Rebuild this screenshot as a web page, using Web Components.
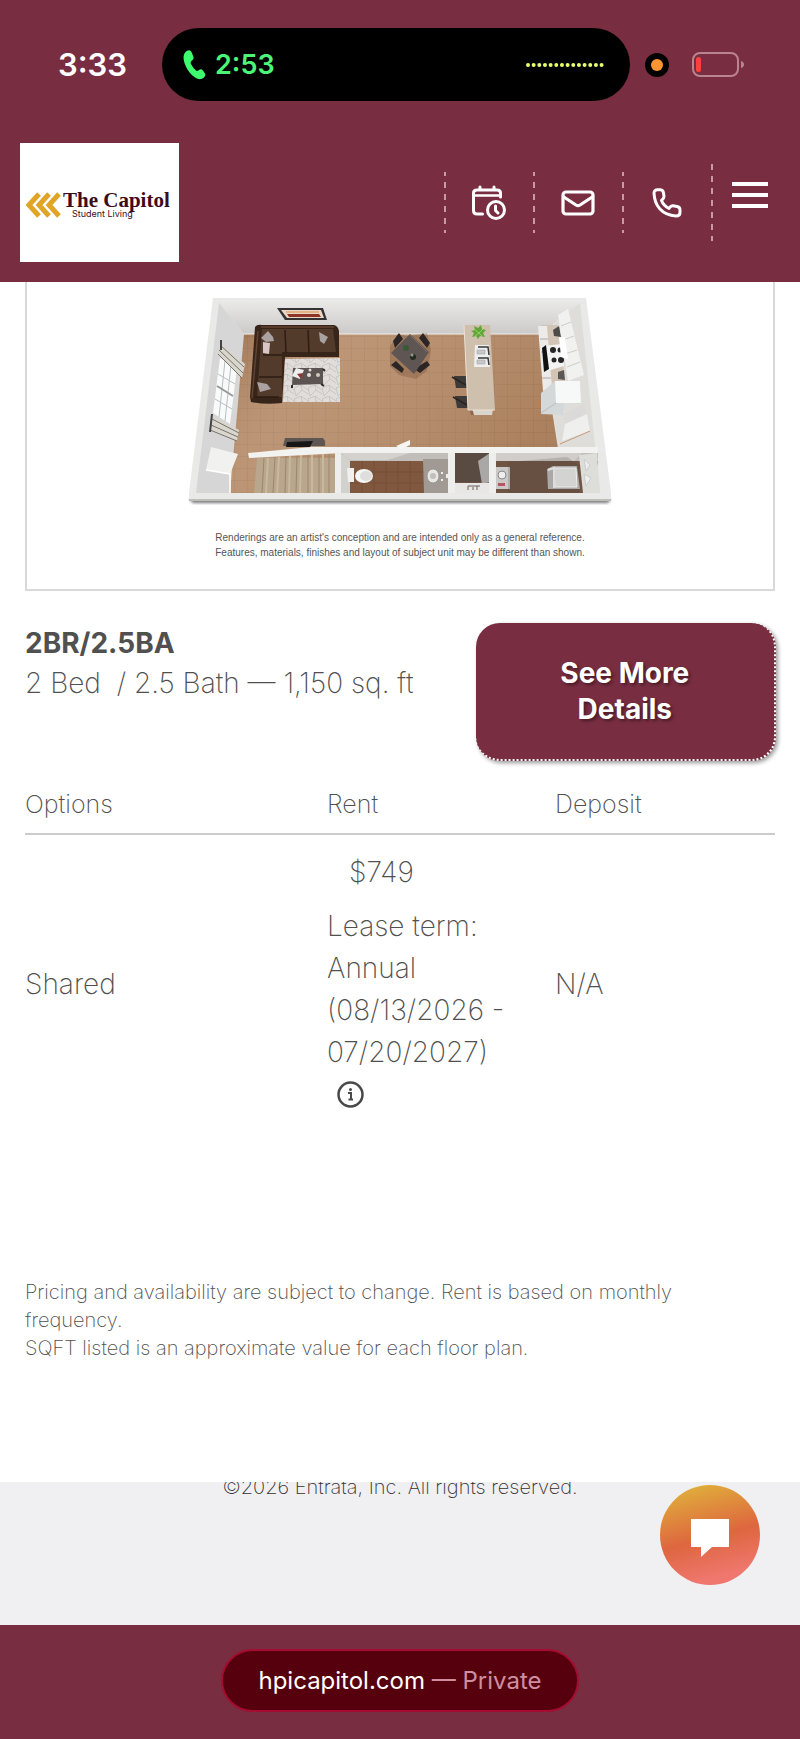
<!DOCTYPE html>
<html lang="en">
<head>
<meta charset="utf-8">
<meta name="viewport" content="width=device-width, initial-scale=1">
<title>The Capitol Student Living</title>
<style>
    body {
        --brand: #782d40;
        --ink: #505050;
        margin: 0;
        background: #fff;
        color: var(--ink);
        font-family: Inter, "Open Sans", sans-serif;
        font-weight: 200;
    }
</style>
</head>
<body>
<status-bar></status-bar>
<site-header>
    <nav-link href="#tour" label="Schedule a tour">
        <svg width="34" height="36" viewBox="0 0 34 36" fill="none" stroke="#fff" stroke-width="3" stroke-linecap="round" stroke-linejoin="round">
            <path d="M10.500 29H5q-3.500 0-3.500-3.500V8Q1.500 5 5 5H25Q28.500 5 28.500 8V12M8 2V5M22 2V5"/>
            <path d="M2 10.500H28" stroke-width="2.500"/>
            <circle cx="24" cy="25" r="8.500"/>
            <path d="M23.500 21V25.500L26 28"/>
        </svg>
    </nav-link>
    <nav-link href="#email" label="Email us">
        <svg width="34" height="26" viewBox="0 0 34 26" fill="none" stroke="#fff" stroke-width="3.200" stroke-linejoin="round">
            <rect x="2" y="2" width="30" height="22" rx="3"/>
            <path d="M2 6.500L15 15q2 1.200 4 0L32 6.500"/>
        </svg>
    </nav-link>
    <nav-link href="#call" label="Call us">
        <svg width="30" height="30" viewBox="0 0 30 30" fill="none" stroke="#fff" stroke-width="3" stroke-linejoin="round">
            <path d="M2 5C2 3 3.500 1.800 5.500 1.800H8.500Q11 2 11.500 5L12 8.500Q12 10.500 9.500 12.500C11 16.500 13.500 18.700 17 20.500Q19 17.500 21 17.800L25 18.500Q28 19 28 22V24.500Q28 28 24 28C10 27 2.500 18 2 5Z"/>
        </svg>
    </nav-link>
</site-header>
<main>
    <floor-plan>
        Renderings are an artist's conception and are intended only as a general reference.<br>
        Features, materials, finishes and layout of subject unit may be different than shown.
    </floor-plan>
    <plan-summary>
        <span slot="name">2BR/2.5BA</span>
        2 Bed &nbsp;/ 2.5 Bath — 1,150 sq. ft
        <span slot="action">See More Details</span>
    </plan-summary>
    <rent-table></rent-table>
    <plan-notes>
        Pricing and availability are subject to change. Rent is based on monthly frequency.<br>
        SQFT listed is an approximate value for each floor plan.
    </plan-notes>
</main>
<site-footer>©2026 Entrata, Inc. All rights reserved.</site-footer>
<address-bar mode="Private">hpicapitol.com</address-bar>

<script>
customElements.define('status-bar', class extends HTMLElement {
    constructor() {
        super();
        this.attachShadow({mode: "open"});
        this.shadowRoot.innerHTML = `
            <style>
                :host {
                    display: flex;
                    align-items: center;
                    padding: 28px 56px 28px 58px;
                    background: var(--brand);
                    color: #fff;
                    font-weight: 600;
                }
                .time { font-size: 31px; width: 104px; }
                .island {
                    flex: 1;
                    display: flex;
                    align-items: center;
                    height: 73px;
                    padding: 0 26px 0 21px;
                    box-sizing: border-box;
                    border-radius: 37px;
                    background: #000;
                    color: #4cf577;
                    font-size: 27px;
                    font-weight: 600;
                }
                .island span { margin: 0 auto 0 9px; }
                .mic { margin: 0 23px 0 15px; }
                svg { display: block; }
            </style>
            <span class="time">3:33</span>
            <div class="island">
                <svg width="23" height="30" viewBox="0 0 23 30" fill="#3dfc6d">
                    <path d="M3 1.500Q7-1 8.500 2L10.500 7Q11 9 9 10.500Q7 12 8 14Q10 18 13 20.500Q14 21.500 16 20Q18 18.500 19.500 20L22 23.500Q23 25.500 21 27.500Q17 31 12 27.500C6 23.500 1 15 .500 8Q.500 3.500 3 1.500Z"/>
                </svg>
                <span>2:53</span>
                <svg width="78" height="6" viewBox="0 0 78 6">
                    <path d="M2 3H77" stroke="#e6ff70" stroke-width="4" stroke-linecap="round" stroke-dasharray="0 5.660"/>
                </svg>
            </div>
            <svg class="mic" width="24" height="24" viewBox="0 0 24 24">
                <circle cx="12" cy="12" r="12"/>
                <circle cx="12" cy="12" r="6" fill="#ff9532"/>
            </svg>
            <svg width="52" height="26" viewBox="0 0 52 26">
                <rect x="1" y="1" width="45" height="23" rx="7" fill="none" stroke="#b98490" stroke-width="2"/>
                <path d="M49 9Q52 10 52 12.500Q52 15 49 16Z" fill="#b98490"/>
                <rect x="4" y="5" width="5" height="15" rx="2.500" fill="#ff3f42"/>
            </svg>
            `
    }
});

customElements.define('nav-link', class extends HTMLElement {
    constructor() {
        super();
        this.attachShadow({mode: "open"});
        this.shadowRoot.innerHTML = `
            <style>
                :host { display: block; }
                a {
                    display: flex;
                    align-items: center;
                    justify-content: center;
                    width: 89px;
                    height: 61px;
                    padding-left: 1px;
                    box-sizing: border-box;
                    background: repeating-linear-gradient(#c999a5 0 4px, transparent 4px 10px, #c999a5 10px 12px) 0 0 / 2px 100% no-repeat;
                }
            </style>
            <a><slot></slot></a>
            `
    }
    connectedCallback() {
        const link = this.shadowRoot.querySelector("a");
        link.href = this.getAttribute("href");
        link.setAttribute("aria-label", this.getAttribute("label"));
    }
});

customElements.define('site-header', class extends HTMLElement {
    constructor() {
        super();
        this.attachShadow({mode: "open"});
        this.shadowRoot.innerHTML = `
            <style>
                :host {
                    display: flex;
                    align-items: center;
                    padding: 14px 20px 20px;
                    background: var(--brand);
                }
                .logo {
                    display: flex;
                    align-items: center;
                    gap: 2px;
                    width: 159px;
                    height: 119px;
                    padding: 4px 6px 0;
                    box-sizing: border-box;
                    background: #fff;
                    color: #3e0b1b;
                    text-decoration: none;
                }
                .words { text-align: center; }
                .name {
                    display: block;
                    font: bold 21px/18px "Liberation Serif", serif;
                    white-space: nowrap;
                }
                .tag {
                    display: block;
                    margin-right: 28px;
                    font-size: 9px;
                    line-height: 10px;
                    font-weight: 400;
                }
                nav {
                    display: flex;
                    align-items: center;
                    margin-left: auto;
                }
                button {
                    width: 69px;
                    height: 77px;
                    padding: 18px 12px 33px 21px;
                    border: 0;
                    background: repeating-linear-gradient(#c999a5 0 6px, transparent 6px 12px) 0 0 / 2px 100% no-repeat;
                }
                svg { display: block; }
            </style>
            <a class="logo" href="#home">
                <svg width="35" height="26" viewBox="0 0 35 26" fill="none" stroke="#e0a526" stroke-width="5">
                    <path d="M13 2L3 13L13 24"/>
                    <path d="M23 2L13 13L23 24"/>
                    <path d="M33 2L23 13L33 24"/>
                </svg>
                <span class="words">
                    <span class="name">The Capitol</span>
                    <span class="tag">Student Living</span>
                </span>
            </a>
            <nav>
                <slot></slot>
                <button type="button" aria-label="Menu">
                    <svg width="36" height="26" viewBox="0 0 36 26" fill="#fff">
                        <path d="M0 0H36V4H0ZM0 11H36V15H0ZM0 22H36V26H0Z"/>
                    </svg>
                </button>
            </nav>
            `
    }
});

customElements.define('floor-plan', class extends HTMLElement {
    constructor() {
        super();
        this.attachShadow({mode: "open"});
        this.shadowRoot.innerHTML = `
            <style>
                :host {
                    display: block;
                    margin: 0 25px;
                    padding: 0 0 29px;
                    border: 2px solid #d9d9d9;
                    border-top: 0;
                    text-align: center;
                }
                svg {
                    display: block;
                    width: 440px;
                    max-width: 100%;
                    margin: 0 auto 18px;
                }
                p {
                    margin: 0;
                    color: #555;
                    font: 10px/15px "Liberation Sans", sans-serif;
                }
            </style>
            <svg viewBox="180 282 440 230" role="img" aria-label="Floor plan">
                <defs>
                    <pattern id="tiles" width="13" height="12" patternUnits="userSpaceOnUse">
                        <rect width="13" height="12" fill="#b68c69"/>
                        <path d="M0 0H13M0 0V12" stroke="#a57c5b" stroke-width=".8"/>
                    </pattern>
                    <pattern id="rug" width="14" height="11" patternUnits="userSpaceOnUse">
                        <rect width="14" height="11" fill="#e0dddb"/>
                        <path d="M0 3L7 0L14 5M2 11L8 5L14 9M7 0L8 5M0 3L2 11" fill="none" stroke="#b9b5b4" stroke-width=".6"/>
                    </pattern>
                    <linearGradient id="wall" x2="0" y2="1">
                        <stop offset="0" stop-color="#e8e7e6"/>
                        <stop offset="1" stop-color="#cccac9"/>
                    </linearGradient>
                    <linearGradient id="light" x2="1" y2=".4">
                        <stop offset="0" stop-color="#5a2d12" stop-opacity=".25"/>
                        <stop offset=".35" stop-color="#fff" stop-opacity=".08"/>
                        <stop offset="1" stop-color="#5a2d12" stop-opacity=".12"/>
                    </linearGradient>
                    <filter id="soft" x="-.1" y="-.5" width="1.2" height="2"><feGaussianBlur stdDeviation="1.500"/></filter>
                </defs>
                <!-- shell -->
                <path d="M189 499H611L608 503H193Z" fill="#777" filter="url(#soft)"/>
                <path d="M213 298H586L611 493V501H189V493Z" fill="#e9e9e7"/>
                <path d="M189 499H611V501H189Z" fill="#bdbdba"/>
                <path d="M219 303H580L540 334H244Z" fill="url(#wall)"/>
                <path d="M219 303L244 334L230 493H196Z" fill="#d6d6d6"/>
                <path d="M580 303L600 493H566L540 334Z" fill="#deddda"/>
                <path d="M244 334H540L565 493H230Z" fill="url(#tiles)"/>
                <path d="M244 334H540L565 493H230Z" fill="url(#light)"/>
                <path d="M244 334H540" stroke="#f2f0ed"/>
                <!-- picture -->
                <path d="M277 308H323L327 320H285Z" fill="#333"/>
                <path d="M281 310H321L324 318H287Z" fill="#ead8c6"/>
                <path d="M287 314H319L321 317H289Z" fill="#8f3528"/>
                <path d="M286 312H319" stroke="#d88e46"/>
                <!-- window and curtains -->
                <path d="M220 358L237 368L230 424L213 413Z" fill="#f9fbfb"/>
                <path d="M225 361L219 417M231 365L225 421M218 374L235 384M217 386L233 396M215 399L232 409" stroke="#b9bec0" fill="none"/>
                <path d="M217 386L233 396" stroke="#999" stroke-width="2"/>
                <path d="M220 343L245 364L242 378L218 354Z" fill="#d9d6ce"/>
                <path d="M220 345L244 367M219 350L243 373M218 354L242 378" stroke="#77736b"/>
                <path d="M212 416L239 430L237 441L210 430Z" fill="#d9d6ce"/>
                <path d="M212 419L239 433M211 425L238 437M210 430L237 441" stroke="#77736b"/>
                <path d="M221 340V350M212 414L210 432" stroke="#444" stroke-width="2"/>
                <path d="M211 447L238 454L230 474L206 470Z" fill="#f1f1f0"/>
                <path d="M206 470L230 474V493" fill="none" stroke="#fff" stroke-width="1.500"/>
                <!-- sofa -->
                <path d="M255 327Q257 324 262 325H334Q338 326 339 331V357H285L282 403Q266 405 251 402L250 397Z" fill="#38251a"/>
                <path d="M262 329H333L336 352H282V397H257L260 355Z" fill="#523b2b"/>
                <path d="M285 330L286 353M308 330L309 353M263 355H282M259 377H282M254 397H279" stroke="#2c1c14" stroke-width="1.500"/>
                <path d="M261 327H334M258 331L252 398" stroke="#604331" stroke-width="1.500"/>
                <path d="M261 338L268 331L273 337L274 341L266 342Z" fill="#aaa1a1"/>
                <path d="M263 342L270 343L269 354L263 353Z" fill="#d8c7c4"/>
                <path d="M319 332L328 337L324 344L320 341Z" fill="#aaa1a1"/>
                <path d="M257 382L267 384L271 389L260 392Z" fill="#aaa1a1"/>
                <!-- rug and coffee table -->
                <path d="M285 359L340 358V402H283Z" fill="url(#rug)"/>
                <path d="M293 368H323V384L292 385Z" fill="#5b5452"/>
                <path d="M292 385V388M321 384L324 386M323 369L325 371" stroke="#302b2a" stroke-width="2"/>
                <path d="M296 368L304 370L300 379L292 376Z" fill="#eee"/>
                <path d="M297 374L303 373L301 379Z" fill="#8d3838"/>
                <circle cx="309" cy="375" r="2" fill="#e5ded8"/>
                <circle cx="318" cy="375" r="2" fill="#d2c8bd"/>
                <circle cx="310" cy="370" r="1.500" fill="#e5ded8"/>
                <!-- media unit -->
                <path d="M285 438H323L325 441V446H283Z" fill="#5e5653"/>
                <path d="M287 442L313 441L310 447H286Z" fill="#171717"/>
                <!-- dining set -->
                <path d="M390 346L398 334L407 336L427 333L431 350L427 371L416 379L399 375L390 366Z" fill="#5c3521" opacity=".25"/>
                <path d="M393 341L399 333L403 339L395 348ZM419 338L423 333L430 343L427 348ZM391 365L396 361L404 369L402 373ZM414 369L427 361L430 365L420 373Z" fill="#2b2625"/>
                <path d="M410 334L429 352L414 374L391 353Z" fill="#5f5653"/>
                <path d="M410 335L427 352" stroke="#7a706b"/>
                <circle cx="406" cy="348" r="3" fill="#3a5a36"/>
                <circle cx="413" cy="357" r="3" fill="#262a25"/>
                <circle cx="412" cy="355" r="1.500" fill="#8da283"/>
                <!-- island -->
                <path d="M466 397L492 400L490 415H471Z" fill="#5c3521" opacity=".4"/>
                <path d="M454 376H468V388H456ZM455 396H469V408H457Z" fill="#3e3a38"/>
                <path d="M452 377L466 385M453 397L467 405" stroke="#272423" stroke-width="1.500"/>
                <path d="M472 408H493L492 415H474Z" fill="#d8d5cf"/>
                <path d="M464 325H490L495 410H468Z" fill="#cfbfad"/>
                <path d="M464 325L468 410H495" fill="none" stroke="#ede0d2"/>
                <path d="M475 345H489L490 367H474Z" fill="#eee"/>
                <path d="M478 347H488L489 355M478 358H488L489 365" fill="none" stroke="#36383b" stroke-width="1.500"/>
                <path d="M477 350H485V354H477ZM477 360H485V364H477Z" fill="#c7c8c8" stroke="#999" stroke-width=".5"/>
                <path d="M471 331L475 330L474 326L478 328L481 325L482 329L486 330L483 333L485 337L480 336L478 339L476 336L472 337L474 333Z" fill="#62a63a"/>
                <path d="M474 329L479 333L475 336M479 333L483 329M479 333L482 336" fill="none" stroke="#8fd061"/>
                <!-- kitchen run -->
                <path d="M541 325H558L565 382L545 392Z" fill="#d3c5b5"/>
                <path d="M538 326H547L552 388L543 391Z" fill="#ecebe9"/>
                <path d="M540 339H548M541 352H549M542 378H551" stroke="#aaa"/>
                <path d="M543 346L562 344L564 366L544 372Z" fill="#f3f3f3"/>
                <path d="M542 348L546 345L549 369L544 372Z" fill="#111"/>
                <g fill="#252525">
                    <circle cx="553" cy="350" r="3"/>
                    <circle cx="560" cy="350" r="2.500"/>
                    <circle cx="554" cy="360" r="2.500"/>
                    <circle cx="561" cy="360" r="3"/>
                </g>
                <path d="M553 330L559 326L561 337L554 336Z" fill="#4e4b49"/>
                <path d="M558 372L564 370L565 380L558 379Z" fill="#5b5753"/>
                <path d="M558 315L568 309L584 375L568 381Z" fill="#f1f1f0"/>
                <path d="M561 326L571 322M563 340L574 336M565 354L577 350M567 367L580 362" stroke="#ccc"/>
                <path d="M559 337H565L568 359L561 357Z" fill="#fff"/>
                <path d="M541 393L555 381L581 384L580 404L564 402L563 415L541 414Z" fill="#d5d8d9"/>
                <path d="M555 381H580L581 403L556 403Z" fill="#f7f8f8"/>
                <path d="M556 403L541 413" stroke="#bbb"/>
                <path d="M563 415L584 404L590 430L568 432Z" fill="#dbdad8"/>
                <path d="M562 441L565 424L587 414L590 431Z" fill="#efefee"/>
                <path d="M560 444L590 431" stroke="#c59b78"/>
                <!-- back rooms -->
                <path d="M343 453H598V493H341Z" fill="#6f5444"/>
                <path d="M343 453H598V461H343Z" fill="#c1bdb9"/>
                <path d="M257 458H336V493H254Z" fill="#b9a68c"/>
                <path d="M264 458L262 493M275 457L273 493M286 456L285 493M297 455L296 493M308 454V493M319 453V493M329 453V493" stroke="#9a876c"/>
                <path d="M268 458L266 493M279 457L277 493M290 456L289 493M301 455L300 493M312 454V493M323 453V493" stroke="#c8b89e" stroke-width="2"/>
                <path d="M341 453L352 462L350 493H341Z" fill="#d3d1ce"/>
                <path d="M341 453H410L387 460H350Z" fill="#d4d2cf"/>
                <path d="M350 461H424V493H350Z" fill="#80583f"/>
                <path d="M362 461V493M374 461V493M386 461V493M398 461V493M410 461V493M350 472H424M350 483H424" stroke="#6f4a34" stroke-width=".6"/>
                <path d="M347 468H354V482H348Z" fill="#f0f0ef"/>
                <ellipse cx="364" cy="476" rx="9" ry="7" fill="#f5f5f4"/>
                <ellipse cx="366" cy="476" rx="6" ry="5" fill="#dededc"/>
                <path d="M423 459H448V493H424Z" fill="#a19a94"/>
                <ellipse cx="433" cy="476" rx="6" ry="7" fill="#e8e7e4" stroke="#999"/>
                <circle cx="433" cy="476" r="3" fill="#c1bebb"/>
                <path d="M441 473H443M441 480H443M447 474V478" stroke="#eee" stroke-width="2"/>
                <path d="M455 453H490V482H455Z" fill="#594b42"/>
                <path d="M478 461L490 453V482L482 484Z" fill="#aaa8a6"/>
                <path d="M455 483H489V493H455Z" fill="#e8e7e5"/>
                <path d="M468 490V486H480M473 487V490M477 486V490" fill="none" stroke="#68625c"/>
                <path d="M496 453H582L574 461H496Z" fill="#d0cdca"/>
                <path d="M496 467H510V489H496Z" fill="#cac9c7"/>
                <circle cx="502" cy="475" r="4" fill="#eee" stroke="#888"/>
                <path d="M498 483H505V486H498Z" fill="#bb5360"/>
                <path d="M508 462L567 457L579 465V493H508Z" fill="#4d4037" opacity=".2"/>
                <path d="M547 469L553 466H577L580 489H548Z" fill="#aaa9a7"/>
                <path d="M554 468H576L577 487H555Z" fill="#d3d3d1" stroke="#eee"/>
                <path d="M548 470L554 468V488" stroke="#dedddb" fill="none" stroke-width="2"/>
                <path d="M579 455L597 453L600 493H583Z" fill="#ddddda"/>
                <path d="M584 459L590 465L586 471ZM584 474L591 478L586 486Z" fill="#eee" stroke="#ccc"/>
                <!-- partitions -->
                <path d="M248 453L311 447H598V453H343L249 458Z" fill="#f2f2f0"/>
                <path d="M335 452H341V493H335ZM448 453H455V493H448ZM489 453H496V493H489Z" fill="#eeeeec"/>
                <path d="M396 446L410 440V445L402 449Z" fill="#f5f5f3"/>
            </svg>
            <p><slot></slot></p>
            `
    }
});

customElements.define('plan-summary', class extends HTMLElement {
    constructor() {
        super();
        this.attachShadow({mode: "open"});
        this.shadowRoot.innerHTML = `
            <style>
                :host {
                    display: flex;
                    justify-content: space-between;
                    align-items: flex-start;
                    margin: 32px 24px 0 25px;
                    font-size: 28px;
                    line-height: 40px;
                }
                h2 {
                    margin: 0;
                    font-size: 28px;
                    line-height: 40px;
                    font-weight: 700;
                }
                p { margin: 0; white-space: nowrap; }
                button {
                    width: 40%;
                    padding: 32px 64px;
                    border: 2px dotted #fff;
                    border-width: 0 2px 2px 0;
                    border-radius: 24px;
                    background: var(--brand);
                    box-shadow: 2px 2px 4px #0006;
                    color: #fff;
                    font: 700 28px/36px Inter, "Open Sans", sans-serif;
                    text-shadow: 2px 2px 3px #0006;
                }
            </style>
            <div>
                <h2><slot name="name"></slot></h2>
                <p><slot></slot></p>
            </div>
            <button type="button"><slot name="action"></slot></button>
            `
    }
});

customElements.define('rent-table', class extends HTMLElement {
    constructor() {
        super();
        this.attachShadow({mode: "open"});
        this.shadowRoot.innerHTML = `
            <style>
                :host {
                    display: block;
                    margin: 16px 25px 0;
                }
                table {
                    width: 100%;
                    table-layout: fixed;
                    border-collapse: collapse;
                    font-size: 28px;
                    line-height: 42px;
                    text-align: left;
                }
                th {
                    padding: 5px 0 7px;
                    border-bottom: 2px solid #ccc;
                    font-size: 25px;
                    line-height: 44px;
                    font-weight: 200;
                }
                th:nth-child(1) { width: 302px; }
                th:nth-child(2) { width: 228px; }
                td { padding: 16px 0 22px; }
                p { margin: 0; }
                .price { padding-left: 22px; margin-bottom: 12px; }
                .term { width: 190px; }
                button {
                    display: block;
                    margin: 0 0 0 10px;
                    padding: 8px 0;
                    border: 0;
                    background: none;
                }
                svg { display: block; }
            </style>
            <table>
                <thead>
                    <tr><th>Options</th><th>Rent</th><th>Deposit</th></tr>
                </thead>
                <tbody>
                    <tr>
                        <td>Shared</td>
                        <td>
                            <p class="price">$749</p>
                            <p class="term">Lease term: Annual (08/13/2026 - 07/20/2027)</p>
                            <button type="button" aria-label="Lease term information">
                                <svg width="27" height="27" viewBox="0 0 27 27">
                                    <circle cx="13.500" cy="13.500" r="12" fill="none" stroke="#484848" stroke-width="2.500"/>
                                    <circle cx="13.500" cy="8.500" r="1.500" fill="#484848"/>
                                    <path d="M11 12H14V18M11.500 18.500H16" fill="none" stroke="#484848" stroke-width="2"/>
                                </svg>
                            </button>
                        </td>
                        <td>N/A</td>
                    </tr>
                </tbody>
            </table>
            `
    }
});

customElements.define('plan-notes', class extends HTMLElement {
    constructor() {
        super();
        this.attachShadow({mode: "open"});
        this.shadowRoot.innerHTML = `
            <style>
                :host {
                    display: block;
                    padding: 140px 25px 120px;
                    font-size: 20px;
                    line-height: 28px;
                }
            </style>
            <slot></slot>
            `
    }
});

customElements.define('site-footer', class extends HTMLElement {
    constructor() {
        super();
        this.attachShadow({mode: "open"});
        this.shadowRoot.innerHTML = `
            <style>
                :host {
                    display: block;
                    position: relative;
                    height: 143px;
                    overflow: hidden;
                    background: #f0f0f2;
                    color: #333;
                    text-align: center;
                    font-size: 20px;
                    line-height: 28px;
                }
                p { margin: -9px 0 0; }
                button {
                    position: absolute;
                    top: 3px;
                    right: 40px;
                    width: 100px;
                    height: 100px;
                    padding: 0;
                    border: 0;
                    border-radius: 50%;
                    background: linear-gradient(165deg, #e0b13b 5%, #de663f 52%, #ef776e 85%);
                }
                svg { display: block; margin: 6px auto 0; }
            </style>
            <p><slot></slot></p>
            <button type="button" aria-label="Open chat">
                <svg width="38" height="38" viewBox="0 0 38 38" fill="#fff">
                    <path d="M0 0H38V28H21L10 38V28H0Z"/>
                </svg>
            </button>
            `
    }
});

customElements.define('address-bar', class extends HTMLElement {
    constructor() {
        super();
        this.attachShadow({mode: "open"});
        this.shadowRoot.innerHTML = `
            <style>
                :host {
                    display: flex;
                    justify-content: center;
                    padding: 24px 0 28px;
                    background: var(--brand);
                }
                button {
                    padding: 14px 35px;
                    border: 2px solid #a40c32;
                    border-radius: 32px;
                    background: #56000e;
                    color: #fff;
                    font: 400 24px/31px Inter, sans-serif;
                }
                .mode { color: #cf8fa0; }
            </style>
            <button type="button"><slot></slot> <span class="mode"></span></button>
            `
    }
    connectedCallback() {
        this.shadowRoot.querySelector(".mode").textContent = "— " + this.getAttribute("mode");
    }
});
</script>
</body>
</html>
